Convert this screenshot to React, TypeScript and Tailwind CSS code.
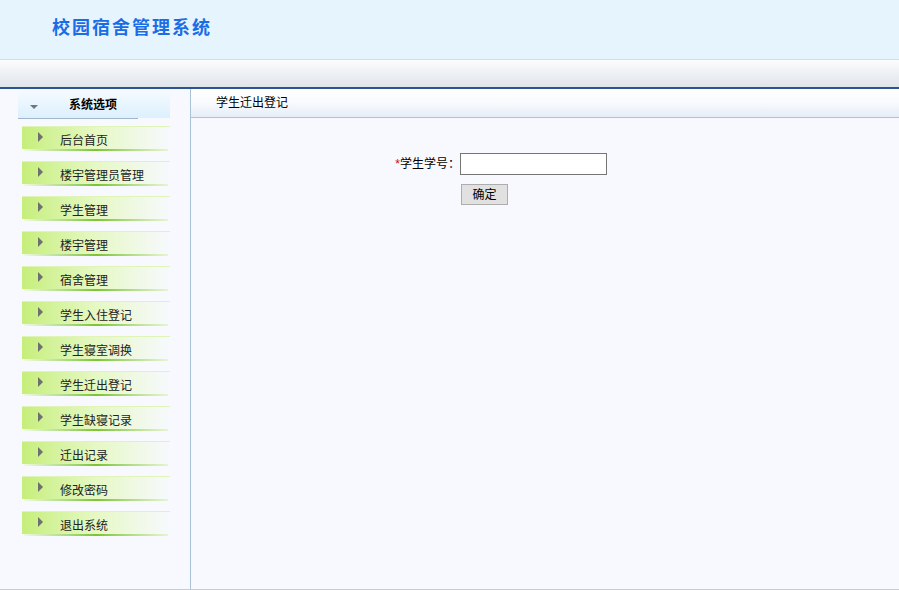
import { ReactNode } from 'react';

const menu = ['后台首页', '楼宇管理员管理', '学生管理', '楼宇管理', '宿舍管理', '学生入住登记', '学生寝室调换', '学生迁出登记', '学生缺寝记录', '迁出记录', '修改密码', '退出系统'];

const font = { fontFamily: '"Liberation Sans", "Noto Sans CJK SC", sans-serif' };

function MenuItem({ children }: { children: ReactNode }) {
  return (
    <div className="h-[35px] pt-[6px] pl-[22px]">
      <div className="w-[148px] border-t border-[#e0f4b8]">
        <div className="h-[22px] relative bg-gradient-to-r from-[#c6ee7a] via-[#e6f8c4] to-[#f7f9fe]">
          <span className="absolute left-[16px] top-[5px] w-0 h-0 border-y-[5px] border-y-transparent border-l-[5px] border-l-[#6f6f6f]" />
          <span className="absolute left-[38px] top-[6px] text-[12px] leading-[16px] text-[#222]">{children}</span>
        </div>
        <div className="h-[2px] bg-gradient-to-r from-[#f0f8e0] via-[#7cc42c] to-[#e8f4d0] mx-[2px]" />
      </div>
    </div>
  );
}

export default function App() {
  return (
    <div className="w-[899px] h-[590px] overflow-hidden bg-[#f7f9fe] flex flex-col" style={font}>
      <div className="h-[60px] bg-[#e6f4fd] border-b border-[#d2dde8] flex items-center pl-[52px] pb-[2px]">
        <h1 className="text-[18px] font-bold text-[#1b6de6] tracking-[2px]">校园宿舍管理系统</h1>
      </div>
      <div className="h-[27px] bg-gradient-to-b from-[#fbfcfd] to-[#e0e5eb]" />
      <div className="h-[2px] bg-[#2b5592]" />
      <div className="flex-1 flex border-b border-[#c8ccd2]">
        <div className="w-[191px] border-r border-[#aac2d8] pt-[3px]">
          <div className="ml-[18px] w-[152px] h-[26px] flex items-center bg-gradient-to-b from-[#f4faff] to-[#dcf0fd]">
            <span className="ml-[12px] w-0 h-0 border-x-[4px] border-x-transparent border-t-[4px] border-t-[#6f7680] mt-[3px]" />
            <span className="ml-[31px] text-[12px] font-bold text-black">系统选项</span>
          </div>
          <div className="ml-[18px] w-[120px] h-px bg-[#9fb6cc]" />
          <div className="pt-[1px]">
            {menu.map((m) => (
              <MenuItem key={m}>{m}</MenuItem>
            ))}
          </div>
        </div>
        <div className="flex-1">
          <div className="h-[29px] bg-gradient-to-b from-[#ffffff] via-[#f8fafd] to-[#e6edf7] border-b border-[#abc4da] flex items-center pl-[25px]">
            <span className="text-[12px] text-black">学生迁出登记</span>
          </div>
          <div className="pt-[35px] pl-[202px]">
            <div className="flex items-center">
              <span className="w-[67px] text-right text-[12px] text-black"><span className="text-[#e00000]">*</span>学生学号：</span>
              <input className="ml-[0px] w-[147px] h-[22px] bg-white border border-[#767676]" />
            </div>
            <button className="mt-[9px] ml-[68px] w-[47px] h-[21px] text-[12px] text-black bg-[#e1e1e1] border border-[#adadad]">确定</button>
          </div>
        </div>
      </div>
    </div>
  );
}
